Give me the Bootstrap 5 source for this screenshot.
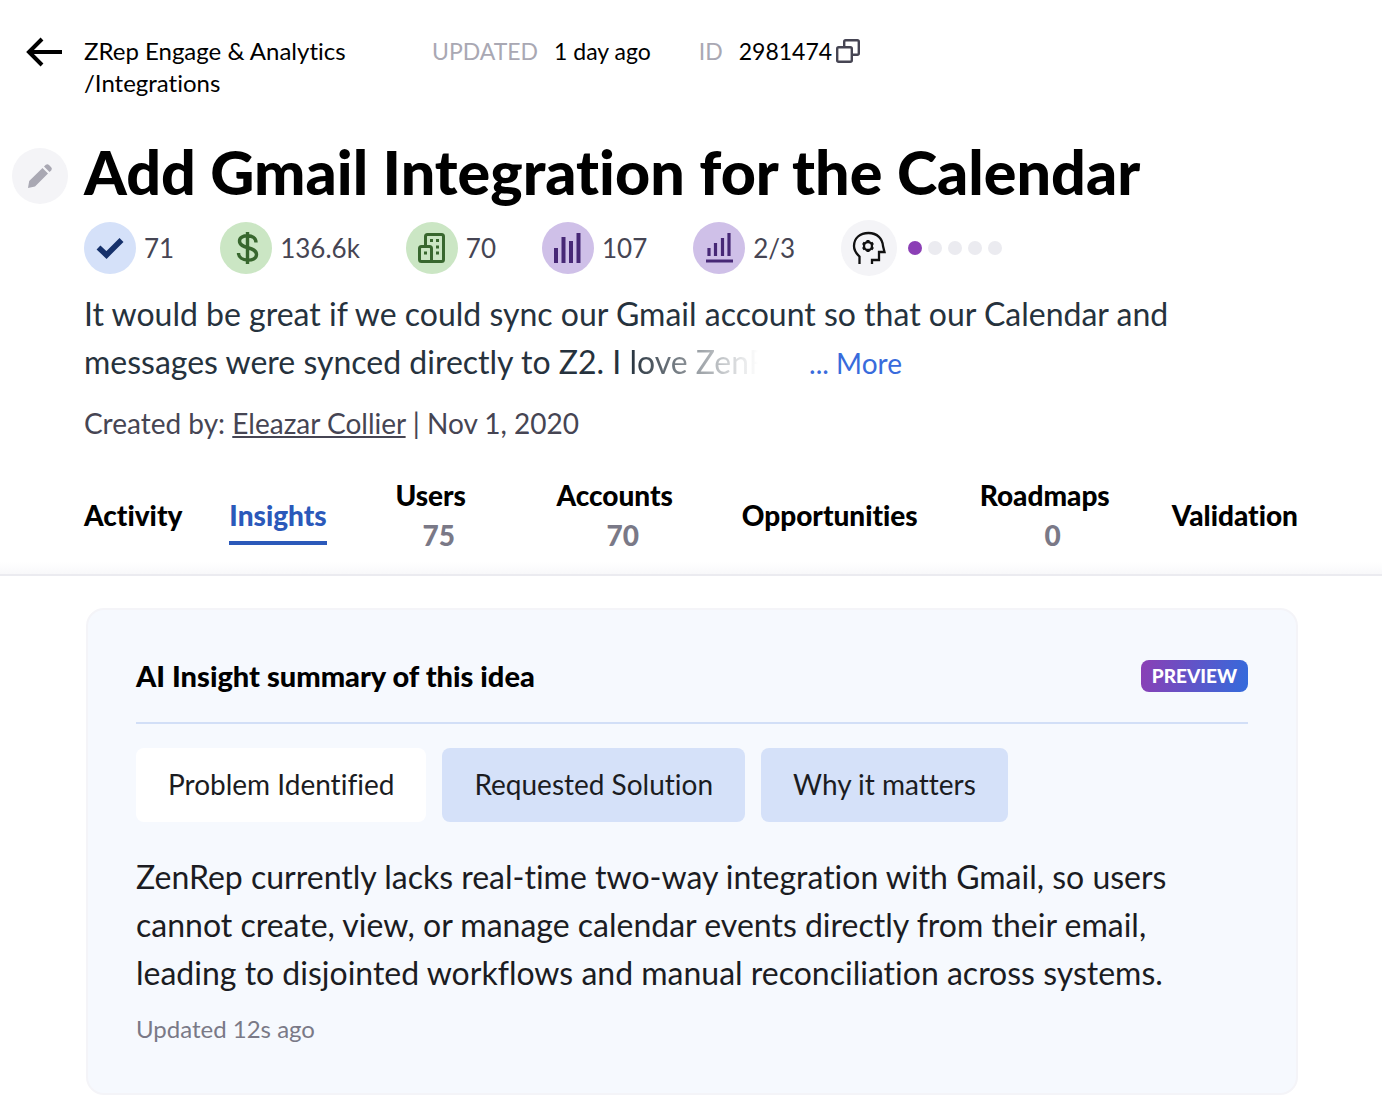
<!DOCTYPE html>
<html lang="en">
<head>
<meta charset="utf-8">
<meta name="viewport" content="width=device-width, initial-scale=1">
<title>Add Gmail Integration for the Calendar</title>
<link href="https://cdn.jsdelivr.net/npm/bootstrap@5.3.0/dist/css/bootstrap.min.css" rel="stylesheet">
<style>
  body, button { font-family: Lato, "Open Sans", sans-serif; font-variant-ligatures: none; }
  body { color: #000; background: #fff; }
  a, button { color: inherit; }
  .page-head { padding: 35px 84px 0; border-bottom: 2px solid #ebebf0; background: linear-gradient(to top, #f8f8fa, #fff 12px); }
  .gutter { margin-left: -72px; width: 72px; flex: none; }
  .crumb { font-size: 24px; line-height: 32px; min-height: 96px; }
  .crumb-path { width: 276px; margin-right: 72px; }
  .crumb a { text-decoration: none; }
  .crumb .caption { color: #a9a8b3; margin-right: 16px; }
  .back { margin-left: 14px; }
  .meta { font-size: 23px; }
  .updated { margin-right: 48px; }
  .plain { border: 0; background: none; padding: 0; }
  .title-row { margin-top: 5px; }
  .idea-title { font-size: 61px; line-height: 72px; font-weight: 900; margin: 0; padding-bottom: 8px; }
  .round-lg { width: 56px; height: 56px; border-radius: 50%; background: #f4f4f7; }
  .round { width: 52px; height: 52px; border-radius: 50%; margin-right: 8px; }
  .blue { background: #d5e1f9; } .green { background: #cbe6c4; } .purple { background: #cfc0e8; }
  .stats { gap: 46px; font-size: 26px; line-height: 36px; color: #464553; margin-top: 4px; }
  .dots { gap: 6px; margin-left: 11px; }
  .dots i { width: 14px; height: 14px; border-radius: 50%; background: #ebebf0; }
  .dots .on { background: #8b3fb5; }
  .body-text { font-size: 32px; line-height: 48px; }
  .idea-text { color: #26323d; margin-top: 14px; }
  .fade-end { background: linear-gradient(to right, #26323d, #26323d00 92%); background-clip: text; -webkit-background-clip: text; color: transparent; }
  .more { color: #386bdc; font-size: 28px; text-decoration: none; margin-left: 32px; }
  .byline { color: #464553; font-size: 28px; line-height: 36px; margin-top: 18px; }
  .idea-tabs { margin-top: 34px; padding-bottom: 19px; font-size: 28px; line-height: 40px; font-weight: 900; }
  .idea-tabs a { text-decoration: none; text-align: center; }
  .idea-tabs .counted { min-width: 114px; }
  .idea-tabs .wide { min-width: 160px; }
  .idea-tabs .num { display: block; margin-left: 16px; color: #7a7987; }
  .idea-tabs .current { color: #2b59ba; border-bottom: 4px solid #2b59ba; padding: 10px 0 6px; }
  .insight { margin: 32px 84px 20px 86px; padding: 48px; border: 2px solid #f4f4f8; border-radius: 18px; background: #f6f9fe; color: #1b1c22; }
  .insight-head { padding-bottom: 28px; border-bottom: 2px solid #d2dff7; min-height: 66px; }
  .insight h2 { font-size: 29px; line-height: 36px; font-weight: 900; margin: 0; color: #000; }
  .preview { height: 32px; padding: 0 11px; border-radius: 8px; font-size: 19px; line-height: 32px; font-weight: 900; color: #fff; background: linear-gradient(100deg, #8b3fb5, #336bdc); }
  .choices { gap: 16px; margin: 24px 0 31px; }
  .choices button { border: 0; border-radius: 8px; background: #d5e1f9; padding: 16px 32px 18px; font-size: 28px; line-height: 40px; }
  .choices .picked { background: #fff; }
  .stamp { font-size: 24px; line-height: 32px; color: #7a7987; margin-top: 16px; }
</style>
</head>
<body>
<header class="page-head">
  <div class="crumb d-flex align-items-start">
    <div class="gutter"><button class="plain back d-block" aria-label="Back"><svg class="d-block" width="36" height="34" viewBox="0 0 36 34" fill="none" stroke="#000" stroke-width="4"><path d="M36 17H3M16 4 3 17l13 13"/></svg></button></div>
    <nav class="crumb-path" aria-label="Breadcrumb"><a href="#">ZRep Engage &amp; Analytics</a> <a href="#" class="d-block">/Integrations</a></nav>
    <div class="meta updated"><span class="caption">UPDATED</span>1 day ago</div>
    <div class="meta d-flex align-items-center"><span class="caption">ID</span>2981474
      <button class="plain ms-1" aria-label="Copy ID"><svg class="d-block" width="24" height="24" viewBox="0 0 24 24" fill="none" stroke="#464553" stroke-width="2.4"><rect x="1.2" y="8.2" width="14.6" height="14.6" rx="1.5"/><path d="M8.2 8V2.7q0-1.5 1.5-1.5h11.6q1.5 0 1.5 1.5v11.600q0 1.500-1.500 1.500H16"/></svg></button>
    </div>
  </div>
  <div class="title-row d-flex align-items-center">
    <div class="gutter"><button class="plain round-lg d-flex align-items-center justify-content-center" aria-label="Edit title"><svg width="28" height="28" viewBox="0 0 28 28" fill="#a9a8b3"><path d="m2 26 1.200-7L16.500 6l5.500 5.500L9 24.500 2 26ZM18 4.500l1.800-1.700Q21.500 1.500 23 3l2.200 2.200q1.400 1.600 0 3.200L23.500 10z"/></svg></button></div>
    <h1 class="idea-title">Add Gmail Integration for the Calendar</h1>
  </div>
  <div class="stats d-flex align-items-center flex-wrap">
    <div class="d-flex align-items-center"><span class="round blue"><svg class="d-block" viewBox="0 0 52 52" fill="none" stroke="#16316b" stroke-width="5.600"><path d="m14.500 25.500 8 7.500L37.500 18"/></svg></span>71</div>
    <div class="d-flex align-items-center"><span class="round green"><svg class="d-block" viewBox="0 0 52 52" fill="none" stroke="#38672e" stroke-width="3.400"><path d="M27.500 10v32M36 20.500c0-9-16.500-8.500-16.500-1.500 0 8.500 17 5 17 13.500 0 8-18 7.500-18-1.500"/></svg></span>136.6k</div>
    <div class="d-flex align-items-center"><span class="round green"><svg class="d-block" viewBox="0 0 52 52" fill="none" stroke="#38672e" stroke-width="3"><path d="M19.500 24V14.500q0-2 2-2h14q2 0 2 2v23q0 2-2 2h-20q-2 0-2-2V26.500q0-2 2-2h8q2 0 2 2v13"/><path d="M24 18.500h3m3 0h3m-3 6.500h3m-3 6h3m-15 0h3"/></svg></span>70</div>
    <div class="d-flex align-items-center"><span class="round purple"><svg class="d-block" viewBox="0 0 52 52" fill="none" stroke="#472876" stroke-width="4"><path d="M14 41V26m7.500 15V15m7.500 26V19m7.500 22V11"/></svg></span>107</div>
    <div class="d-flex align-items-center"><span class="round purple"><svg class="d-block" viewBox="0 0 52 52" fill="none" stroke="#472876" stroke-width="3.200"><path d="M16 34v-8m6.500 8V21m7 13V16m6.500 18V11M13 39h27"/></svg></span>2/3</div>
    <div class="d-flex align-items-center"><span class="round-lg"><svg class="d-block" viewBox="0 0 56 56" fill="none" stroke="#111" stroke-width="2.300"><path d="M18.500 44v-7.500q-5.500-5-5.500-10.500c0-8 6-13 14.500-13 9 0 14 6 14.500 13l1.500 6H38v8h-7v4"/><circle cx="27" cy="26" r="4"/><path stroke-width="3" d="M27 22v-2m0 12v-2m3.500-6 1.700-1m-10.400 6 1.700-1m7 0 1.700 1m-10.400-6 1.700 1"/></svg></span>
      <span class="dots d-flex" role="img" aria-label="1 of 5"><i class="on"></i><i></i><i></i><i></i><i></i></span></div>
  </div>
  <p class="body-text idea-text mb-0">It would be great if we could sync our Gmail account so that our Calendar and<br>messages were synced directly to Z2. I <span class="fade-end">love ZenR</span> <a class="more" href="#">... More</a></p>
  <p class="byline mb-0">Created by: <a href="#">Eleazar Collier</a> | Nov 1, 2020</p>
  <nav class="idea-tabs d-flex align-items-center justify-content-between" aria-label="Idea sections">
    <a href="#">Activity</a>
    <a href="#" class="current" aria-current="page">Insights</a>
    <a href="#" class="counted">Users<span class="num">75</span></a>
    <a href="#" class="counted wide">Accounts<span class="num">70</span></a>
    <a href="#">Opportunities</a>
    <a href="#" class="counted wide">Roadmaps<span class="num">0</span></a>
    <a href="#">Validation</a>
  </nav>
</header>
<main>
  <section class="insight">
    <div class="insight-head d-flex align-items-center justify-content-between"><h2>AI Insight summary of this idea</h2><span class="preview">PREVIEW</span></div>
    <div class="choices d-flex flex-wrap"><button class="picked">Problem Identified</button><button>Requested Solution</button><button>Why it matters</button></div>
    <p class="body-text mb-0">ZenRep currently lacks real-time two-way integration with Gmail, so users cannot create, view, or manage calendar events directly from their email, leading to disjointed workflows and manual reconciliation across systems.</p>
    <p class="stamp mb-0">Updated 12s ago</p>
  </section>
</main>
<script src="https://cdn.jsdelivr.net/npm/bootstrap@5.3.0/dist/js/bootstrap.bundle.min.js"></script>
</body>
</html>
